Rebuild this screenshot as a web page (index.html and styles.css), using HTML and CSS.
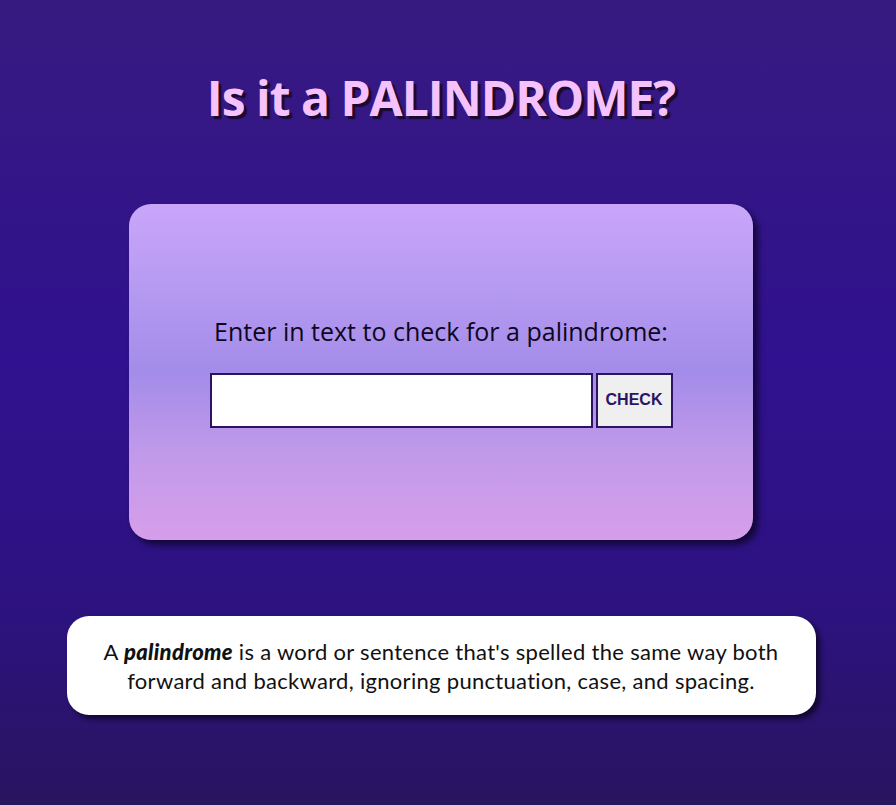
FILE: index.html
```html
<!DOCTYPE html>
<html lang="en">
<head>
<meta charset="utf-8">
<title>Palindrome Checker</title>
<link rel="stylesheet" href="styles.css">
</head>
<body>
<main class="page">
  <h1 class="title">Is it a PALINDROME?</h1>
  <section class="card">
    <label class="prompt" for="text-input">Enter in text to check for a palindrome:</label>
    <div class="row">
      <input class="field" id="text-input" type="text">
      <button class="check" type="button">CHECK</button>
    </div>
  </section>
  <section class="info">
    <p class="info-text">A <em class="word">palindrome</em> is a word or sentence that's spelled the same way both forward and backward, ignoring punctuation, case, and spacing.</p>
  </section>
</main>
</body>
</html>
```
FILE: styles.css
```css
html, body {
  margin: 0;
  padding: 0;
  height: 100%;
}
body {
  background: linear-gradient(180deg, #371a80 0%, #30118f 45%, #2d1280 75%, #28155f 100%);
  min-height: 805px;
}
.page {
  display: flex;
  flex-direction: column;
  align-items: center;
  padding: 0 14px 0 0;
}
.title {
  margin: 66px 0 0;
  font-family: "Open Sans", sans-serif;
  font-weight: 700;
  font-size: 48px;
  line-height: 64px;
  color: #f6c2fd;
  text-shadow: 3px 3px 1px #1a0a2e;
  letter-spacing: -1px;
}
.card {
  margin-top: 74px;
  width: 624px;
  height: 336px;
  box-sizing: border-box;
  border-radius: 22px;
  background: linear-gradient(180deg, #c9a6fa 0%, #b69af1 25%, #a38ce9 50%, #c29ae9 75%, #d69eea 100%);
  box-shadow: 5px 5px 6px rgba(10, 4, 30, 0.75);
  display: flex;
  flex-direction: column;
  align-items: center;
  justify-content: center;
  gap: 28px;
}
.prompt {
  font-family: "Open Sans", sans-serif;
  font-size: 25px;
  line-height: 28px;
  color: #0c0620;
}
.row {
  display: flex;
  gap: 3px;
}
.field {
  width: 383px;
  height: 55px;
  box-sizing: border-box;
  border: 2px solid #2a1463;
  background: #fff;
  margin: 0;
}
.check {
  width: 77px;
  height: 55px;
  box-sizing: border-box;
  border: 2px solid #2a1463;
  background: #efefef;
  color: #2a1463;
  font-family: "Liberation Sans", Arial, sans-serif;
  font-weight: 700;
  font-size: 16px;
  padding: 0;
  margin: 0;
}
.info {
  margin-top: 76px;
  width: 749px;
  height: 99px;
  box-sizing: border-box;
  background: #fff;
  border-radius: 22px;
  box-shadow: 4px 4px 5px rgba(10, 4, 30, 0.75);
  display: flex;
  align-items: center;
  justify-content: center;
  padding: 0 30px;
}
.info-text {
  margin: 0;
  text-align: center;
  font-family: Lato, sans-serif;
  font-size: 22px;
  letter-spacing: 0.3px;
  line-height: 29px;
  color: #111;
}
.word {
  font-weight: 900;
  font-style: italic;
}
```
